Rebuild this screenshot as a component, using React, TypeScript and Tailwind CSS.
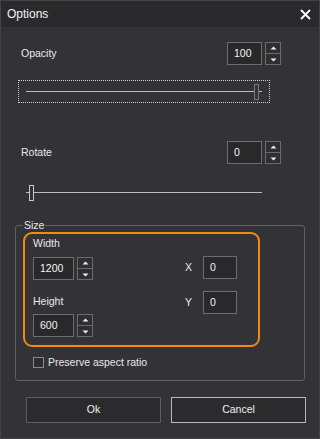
import React from "react";

function Spinner() {
  return (
    <div className="flex flex-col w-[16px] h-[23px] ml-[3px]">
      <div className="flex-1 flex items-center justify-center border border-[#6b6b6f] bg-[#2f2f32]">
        <svg width="7" height="5" viewBox="0 0 7 5">
          <path d="M3.5 0.5 L6.5 3.5 L0.5 3.5 Z" fill="#f0f0f0" />
        </svg>
      </div>
      <div className="flex-1 flex items-center justify-center border border-t-0 border-[#6b6b6f] bg-[#2f2f32]">
        <svg width="7" height="5" viewBox="0 0 7 5">
          <path d="M0.5 1.5 L6.5 1.5 L3.5 4.5 Z" fill="#f0f0f0" />
        </svg>
      </div>
    </div>
  );
}

function NumBox({ value, w }: { value: string; w: string }) {
  return (
    <div className={`${w} h-[23px] flex items-center pl-[6px] border border-[#6e6e72] bg-[#29292b] text-[#f2f2f2]`}>
      {value}
    </div>
  );
}

function Thumb({ light }: { light?: boolean }) {
  return (
    <div className={`w-[5px] h-[16px] border ${light ? "border-[#c8c8c8]" : "border-[#7a7a7e]"} bg-[#333337]`} />
  );
}

export default function App() {
  return (
    <div className="w-[320px] h-[439px] flex flex-col bg-[#333337] border border-[#444448] text-[10.5px] text-[#e8e8e8] font-['Liberation_Sans',Arial,sans-serif] overflow-hidden">
      <div className="h-[26px] flex items-center justify-between pl-[6px] pr-[8px] bg-[#2a2a2d]">
        <span className="text-[12px] text-[#f2f2f2]">Options</span>
        <svg width="11" height="11" viewBox="0 0 11 11">
          <path d="M1 1 L10 10 M10 1 L1 10" stroke="#ffffff" strokeWidth="1.8" />
        </svg>
      </div>

      <div className="mt-[15px] h-[23px] flex items-center pl-[20px] pr-[38px]">
        <span className="flex-1">Opacity</span>
        <NumBox value="100" w="w-[35px]" />
        <Spinner />
      </div>

      <div className="mt-[15px] ml-[17px] w-[252px] h-[23px] flex items-center px-[7px] border border-dotted border-[#cfcfcf]">
        <div className="flex-1 h-px bg-[#bdbdbd]" />
        <Thumb />
        <div className="w-[3px] h-px bg-[#bdbdbd]" />
      </div>

      <div className="mt-[38px] h-[23px] flex items-center pl-[20px] pr-[38px]">
        <span className="flex-1">Rotate</span>
        <NumBox value="0" w="w-[35px]" />
        <Spinner />
      </div>

      <div className="mt-[17px] ml-[17px] w-[252px] h-[23px] flex items-center px-[8px]">
        <div className="w-[3px] h-px bg-[#bdbdbd]" />
        <Thumb light />
        <div className="flex-1 h-px bg-[#bdbdbd]" />
      </div>

      <div className="relative mt-[21px] ml-[14px] w-[290px] h-[156px] border border-[#5f5f64] rounded-[3px] flex flex-col">
        <span className="absolute left-[7px] -top-[8px] px-[1px] bg-[#333337] leading-[14px]">Size</span>
        <div className="mt-[6px] ml-[7px] w-[237px] h-[115px] border-2 border-[#f28a0f] rounded-[9px] flex pl-[8px]">
          <div className="flex flex-col w-[152px]">
            <span className="mt-[2px] h-[14px] leading-[14px]">Width</span>
            <div className="mt-[7px] flex">
              <NumBox value="1200" w="w-[41px]" />
              <Spinner />
            </div>
            <span className="mt-[14px] h-[14px] leading-[14px]">Height</span>
            <div className="mt-[6px] flex">
              <NumBox value="600" w="w-[41px]" />
              <Spinner />
            </div>
          </div>
          <div className="flex flex-col mt-[22px] gap-[12px]">
            <div className="flex items-center h-[23px]">
              <span className="w-[18px]">X</span>
              <NumBox value="0" w="w-[34px]" />
            </div>
            <div className="flex items-center h-[23px]">
              <span className="w-[18px]">Y</span>
              <NumBox value="0" w="w-[34px]" />
            </div>
          </div>
        </div>
        <div className="mt-[8px] ml-[17px] flex items-center">
          <div className="w-[11px] h-[11px] border border-[#8a8a8e] bg-[#2c2c2e]" />
          <span className="ml-[4px]">Preserve aspect ratio</span>
        </div>
      </div>

      <div className="mt-[16px] ml-[25px] flex gap-[10px]">
        <div className="w-[135px] h-[26px] flex items-center justify-center border border-[#5e5e62] bg-[#2b2b2e] text-[#f0f0f0]">Ok</div>
        <div className="w-[135px] h-[26px] flex items-center justify-center border border-[#b8b8bc] bg-[#2b2b2e] text-[#f0f0f0]">Cancel</div>
      </div>
    </div>
  );
}
